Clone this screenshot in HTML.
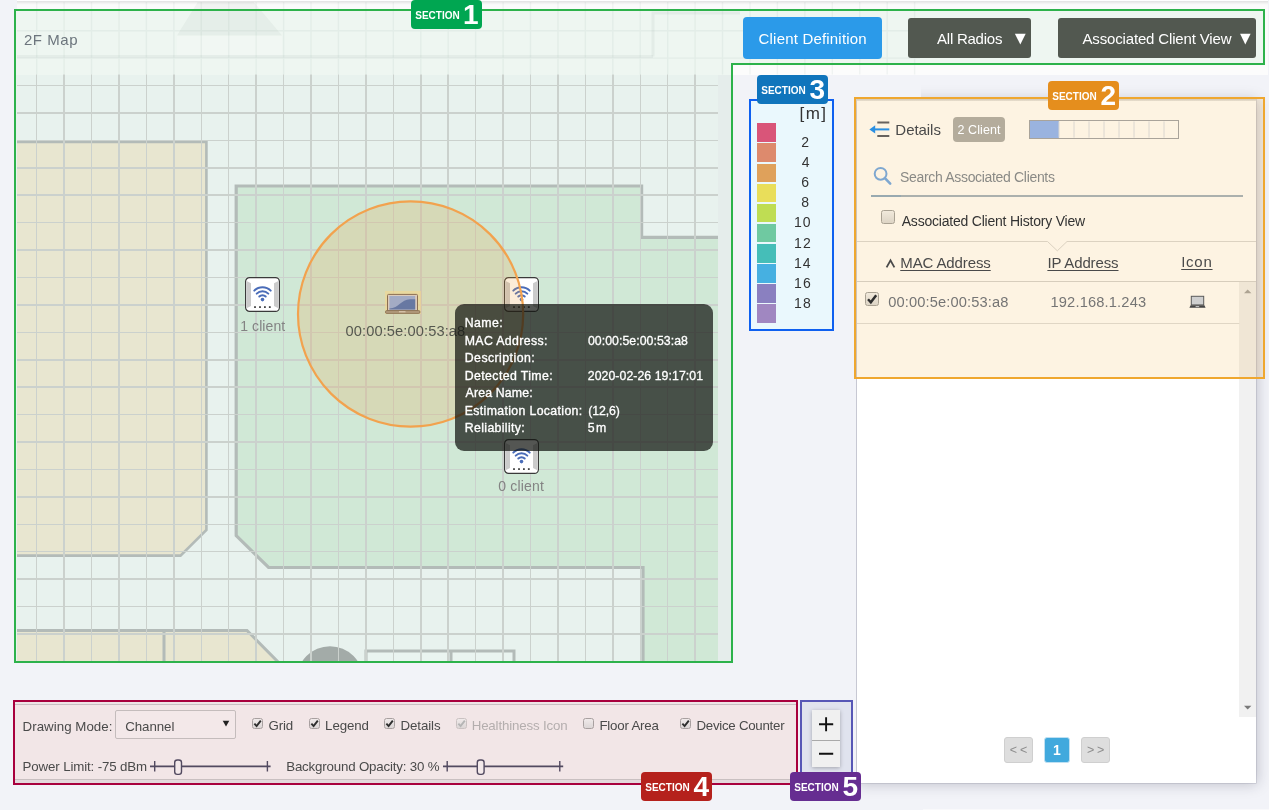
<!DOCTYPE html>
<html lang="en"><head><meta charset="utf-8"><title>2F Map</title>
<style>
html,body{margin:0;padding:0}
body{width:1269px;height:810px;overflow:hidden;background:#f2f3f8;position:relative;font-family:"Liberation Sans", Arial, sans-serif;}
#app{position:absolute;left:0;top:0;width:1269px;height:810px;overflow:hidden;will-change:transform}
.abs{position:absolute;display:block}
.t{position:absolute;white-space:nowrap;font-family:"Liberation Sans", Arial, sans-serif;}
</style></head>
<body>
<div id="app">
<div style="position:absolute;left:923px;top:808.5px;width:346.00px;height:1.50px;background:#f9f9fb;"></div>
<div style="position:absolute;left:17px;top:0px;width:1251.00px;height:74.50px;background:linear-gradient(#fff 0,#fff 1px,#e2e2e2 1px,#ececec 2.5px,#f7f7f7 4px,#fbfbfb 5px);"></div>
<div style="position:absolute;left:16px;top:11px;width:1247.00px;height:53.00px;background:#eef6f1;"></div>
<div style="position:absolute;left:16px;top:64px;width:716.00px;height:10.50px;background:#eef6f1;"></div>
<div style="position:absolute;left:733px;top:65.5px;width:535.00px;height:9.00px;background:#fcfcfc;"></div>
<div style="position:absolute;left:16px;top:74.5px;width:716.00px;height:586.50px;background:#e8f2ee;"></div>
<div style="position:absolute;left:718px;top:74.5px;width:14.00px;height:586.50px;background:#e5edeb;"></div>
<svg class="abs" style="left:0;top:0" width="1269" height="810" viewBox="0 0 1269 810"><defs><clipPath id="cm"><rect x="17" y="74.5" width="701" height="586.5"/></clipPath><filter id="bl" color-interpolation-filters="sRGB" x="-5%" y="-5%" width="110%" height="110%"><feGaussianBlur stdDeviation="0.6"/></filter><clipPath id="ch"><rect x="17" y="2" width="903" height="72.5"/></clipPath></defs><g clip-path="url(#ch)"><polygon points="199,0 252,0 282,35.5 177,35.5" fill="rgba(120,140,130,.07)"/><rect x="177" y="35.5" width="105" height="20" fill="rgba(255,255,255,.2)"/><rect x="17" y="55" width="636" height="3" fill="rgba(120,140,130,.08)"/><path d="M653,56.5 V13 H740" fill="none" stroke="rgba(120,140,130,.09)" stroke-width="3"/><path d="M36.69,2V75M64.12,2V75M91.55,2V75M118.99,2V75M146.42,2V75M173.86,2V75M201.29,2V75M228.73,2V75M256.16,2V75M283.60,2V75M311.03,2V75M338.47,2V75M365.90,2V75M393.34,2V75M420.77,2V75M448.21,2V75M475.64,2V75M503.08,2V75M530.51,2V75M557.95,2V75M585.38,2V75M612.82,2V75M640.25,2V75M667.69,2V75M695.12,2V75M722.56,2V75M750.00,2V75M777.43,2V75M804.87,2V75M832.30,2V75M859.74,2V75M887.17,2V75M914.60,2V75M17,30.72H920M17,58.14H920" stroke="rgba(120,150,135,.085)" stroke-width="1.4" fill="none"/></g><g clip-path="url(#cm)"><g filter="url(#bl)"><polygon points="10,141.9 206.4,141.9 206.4,530 180.5,555.6 10,555.6" fill="#e8e6d0" stroke="#b3bbb8" stroke-width="2.6"/><polygon points="236.2,186 641.6,186 641.6,237.4 730,237.4 730,670 643,670 643,567.5 268.6,567.5 236.2,535.6" fill="#d0e8d6"/><path d="M643,670 V567.5 H268.6 L236.2,535.6 V186 H641.6 V237.4 H730" fill="none" stroke="#b3bbb8" stroke-width="3.2"/><polygon points="10,630.5 247,630.5 286,670 10,670" fill="#e8e6d0" stroke="#b3bbb8" stroke-width="3"/><path d="M164,630.5V670" stroke="#b3bbb8" stroke-width="3"/><circle cx="330" cy="679.5" r="33.3" fill="#a3aba8"/><rect x="366" y="651" width="148" height="30" fill="#eaf4f0" stroke="#b3bbb8" stroke-width="3"/><path d="M451,651V670" stroke="#b3bbb8" stroke-width="3"/></g><path d="M36.69,74V661M64.12,74V661M91.55,74V661M118.99,74V661M146.42,74V661M173.86,74V661M201.29,74V661M228.73,74V661M256.16,74V661M283.60,74V661M311.03,74V661M338.47,74V661M365.90,74V661M393.34,74V661M420.77,74V661M448.21,74V661M475.64,74V661M503.08,74V661M530.51,74V661M557.95,74V661M585.38,74V661M612.82,74V661M640.25,74V661M667.69,74V661M695.12,74V661M17,85.56H718M17,112.98H718M17,140.40H718M17,167.82H718M17,195.24H718M17,222.66H718M17,250.08H718M17,277.50H718M17,304.92H718M17,332.34H718M17,359.76H718M17,387.18H718M17,414.60H718M17,442.02H718M17,469.44H718M17,496.86H718M17,524.28H718M17,551.70H718M17,579.12H718M17,606.54H718M17,633.96H718" stroke="#cbd1cd" stroke-width="1.5" fill="none" shape-rendering="crispEdges"/></g></svg>
<svg class="abs" style="left:245px;top:277px" width="35" height="35" viewBox="0 0 35 35"><rect x="0.6" y="0.6" width="33.8" height="33.8" rx="4" fill="#fff" stroke="#3a3a3a" stroke-width="1.2"/><polygon points="1.6,4 6,6.2 6,29 1.6,31.2" fill="#cbcbcb"/><polygon points="33.4,4 29,6.2 29,29 33.4,31.2" fill="#cbcbcb"/><g fill="none" stroke="#4a6cb8" stroke-width="2" stroke-linecap="round"><path d="M9.3,13.6 A11.6,11.6 0 0 1 25.7,13.6"/><path d="M11.7,16.6 A8.2,8.2 0 0 1 23.3,16.6"/><path d="M14.3,19.5 A4.5,4.5 0 0 1 20.7,19.5"/></g><circle cx="17.5" cy="22.6" r="1.8" fill="#4a6cb8"/><rect x="9.1" y="29.2" width="1.8" height="1.8" fill="#444"/><rect x="14.1" y="29.2" width="1.8" height="1.8" fill="#444"/><rect x="19.0" y="29.2" width="1.8" height="1.8" fill="#444"/><rect x="23.900000000000002" y="29.2" width="1.8" height="1.8" fill="#444"/></svg>
<svg class="abs" style="left:504px;top:277px" width="35" height="35" viewBox="0 0 35 35"><rect x="0.6" y="0.6" width="33.8" height="33.8" rx="4" fill="#fff" stroke="#3a3a3a" stroke-width="1.2"/><polygon points="1.6,4 6,6.2 6,29 1.6,31.2" fill="#cbcbcb"/><polygon points="33.4,4 29,6.2 29,29 33.4,31.2" fill="#cbcbcb"/><g fill="none" stroke="#4a6cb8" stroke-width="2" stroke-linecap="round"><path d="M9.3,13.6 A11.6,11.6 0 0 1 25.7,13.6"/><path d="M11.7,16.6 A8.2,8.2 0 0 1 23.3,16.6"/><path d="M14.3,19.5 A4.5,4.5 0 0 1 20.7,19.5"/></g><circle cx="17.5" cy="22.6" r="1.8" fill="#4a6cb8"/><rect x="9.1" y="29.2" width="1.8" height="1.8" fill="#444"/><rect x="14.1" y="29.2" width="1.8" height="1.8" fill="#444"/><rect x="19.0" y="29.2" width="1.8" height="1.8" fill="#444"/><rect x="23.900000000000002" y="29.2" width="1.8" height="1.8" fill="#444"/></svg>
<svg class="abs" style="left:504px;top:439px" width="35" height="35" viewBox="0 0 35 35"><rect x="0.6" y="0.6" width="33.8" height="33.8" rx="4" fill="#fff" stroke="#3a3a3a" stroke-width="1.2"/><polygon points="1.6,4 6,6.2 6,29 1.6,31.2" fill="#cbcbcb"/><polygon points="33.4,4 29,6.2 29,29 33.4,31.2" fill="#cbcbcb"/><g fill="none" stroke="#4a6cb8" stroke-width="2" stroke-linecap="round"><path d="M9.3,13.6 A11.6,11.6 0 0 1 25.7,13.6"/><path d="M11.7,16.6 A8.2,8.2 0 0 1 23.3,16.6"/><path d="M14.3,19.5 A4.5,4.5 0 0 1 20.7,19.5"/></g><circle cx="17.5" cy="22.6" r="1.8" fill="#4a6cb8"/><rect x="9.1" y="29.2" width="1.8" height="1.8" fill="#444"/><rect x="14.1" y="29.2" width="1.8" height="1.8" fill="#444"/><rect x="19.0" y="29.2" width="1.8" height="1.8" fill="#444"/><rect x="23.900000000000002" y="29.2" width="1.8" height="1.8" fill="#444"/></svg>
<span class="t" style="left:240.22px;top:318.60px;font-size:14px;line-height:14px;color:#838383;letter-spacing:0.079px;">1 client</span>
<span class="t" style="left:498.30px;top:479.00px;font-size:14px;line-height:14px;color:#838383;letter-spacing:0.182px;">0 client</span>
<svg class="abs" style="left:290px;top:195px" width="240" height="240" viewBox="290 195 240 240"><circle cx="410.6" cy="314" r="112.6" fill="rgba(240,160,60,0.2)" stroke="#f2a24e" stroke-width="2.2"/></svg>
<div style="position:absolute;left:385px;top:291px;width:35.70px;height:22.70px;background:rgba(250,215,135,.5);"></div>
<svg class="abs" style="left:385px;top:293px" width="36" height="21" viewBox="0 0 36 21"><rect x="2.5" y="1.4" width="30" height="16.6" rx="1" fill="#dccbbb" stroke="#8b6e52" stroke-width="1"/><rect x="4.4" y="3" width="25.8" height="13.6" fill="#a3abc4"/><path d="M4.4,16.6 V15.6 C14,15 16,6.6 25,6.2 H30.2 V16.6 Z" fill="#6878a2"/><rect x="0.5" y="17.6" width="34.4" height="2.8" rx="1.2" fill="#b29a7c" stroke="#846a4c" stroke-width=".8"/><rect x="14" y="18" width="6.5" height="1.4" fill="#d4c0a6"/></svg>
<span class="t" style="left:345.57px;top:323.60px;font-size:14.67px;line-height:14.67px;color:#55584f;letter-spacing:0.093px;">00:00:5e:00:53:a8</span>
<div style="position:absolute;left:455px;top:304px;width:258.00px;height:146.50px;background:rgba(18,21,16,.72);border-radius:9px;"></div>
<span class="t" style="left:464.78px;top:317.20px;font-size:12.3px;line-height:12.3px;color:#fff;letter-spacing:0.430px;-webkit-text-stroke:.35px #fff;">Name:</span>
<span class="t" style="left:464.78px;top:334.70px;font-size:12.3px;line-height:12.3px;color:#fff;letter-spacing:0.362px;-webkit-text-stroke:.35px #fff;">MAC Address:</span>
<span class="t" style="left:587.88px;top:334.70px;font-size:12.3px;line-height:12.3px;color:#fff;letter-spacing:0.052px;-webkit-text-stroke:.3px #fff;">00:00:5e:00:53:a8</span>
<span class="t" style="left:464.78px;top:352.20px;font-size:12.3px;line-height:12.3px;color:#fff;letter-spacing:0.449px;-webkit-text-stroke:.35px #fff;">Description:</span>
<span class="t" style="left:464.78px;top:369.70px;font-size:12.3px;line-height:12.3px;color:#fff;letter-spacing:0.399px;-webkit-text-stroke:.35px #fff;">Detected Time:</span>
<span class="t" style="left:587.76px;top:369.70px;font-size:12.3px;line-height:12.3px;color:#fff;letter-spacing:0.059px;-webkit-text-stroke:.3px #fff;">2020-02-26 19:17:01</span>
<span class="t" style="left:465.56px;top:387.20px;font-size:12.3px;line-height:12.3px;color:#fff;letter-spacing:0.156px;-webkit-text-stroke:.35px #fff;">Area Name:</span>
<span class="t" style="left:464.78px;top:404.70px;font-size:12.3px;line-height:12.3px;color:#fff;letter-spacing:0.352px;-webkit-text-stroke:.35px #fff;">Estimation Location:</span>
<span class="t" style="left:588.20px;top:404.70px;font-size:12.3px;line-height:12.3px;color:#fff;letter-spacing:-0.096px;-webkit-text-stroke:.3px #fff;">(12,6)</span>
<span class="t" style="left:464.78px;top:422.20px;font-size:12.3px;line-height:12.3px;color:#fff;letter-spacing:0.358px;-webkit-text-stroke:.35px #fff;">Reliability:</span>
<span class="t" style="left:587.64px;top:422.20px;font-size:12.3px;line-height:12.3px;color:#fff;letter-spacing:1.569px;-webkit-text-stroke:.3px #fff;">5m</span>
<span class="t" style="left:23.95px;top:31.90px;font-size:15px;line-height:15px;color:#6c757d;letter-spacing:0.537px;">2F Map</span>
<div style="position:absolute;left:743px;top:17px;width:139.00px;height:42.00px;background:#2b9ae9;border-radius:4px;"></div>
<span class="t" style="left:758.59px;top:31.10px;font-size:15px;line-height:15px;color:#fff;letter-spacing:0.188px;">Client Definition</span>
<div style="position:absolute;left:908px;top:18px;width:123.00px;height:40.00px;background:#525850;border-radius:3px;"></div>
<span class="t" style="left:937.04px;top:31.10px;font-size:15px;line-height:15px;color:#fff;letter-spacing:-0.237px;">All Radios</span>
<div style="position:absolute;left:1058px;top:18px;width:198.00px;height:40.00px;background:#525850;border-radius:3px;"></div>
<span class="t" style="left:1082.44px;top:31.10px;font-size:15px;line-height:15px;color:#fff;letter-spacing:-0.151px;">Associated Client View</span>
<svg class="abs" style="left:1010px;top:30px" width="250" height="18" viewBox="1010 30 250 18"><polygon points="1014.9,33.8 1025.7,33.8 1020.3,44.4" fill="#fff"/><polygon points="1240.1,33.8 1250.6,33.8 1245.3,44.4" fill="#fff"/></svg>
<div style="position:absolute;left:749px;top:99px;width:85.30px;height:232.00px;box-sizing:border-box;border:2px solid #0f60f0;background:#eaf8fd;"></div>
<div style="position:absolute;left:757px;top:123.3px;width:19.00px;height:18.70px;background:#d95579;"></div>
<div style="position:absolute;left:757px;top:143.4px;width:19.00px;height:18.70px;background:#dd8a6d;"></div>
<div style="position:absolute;left:757px;top:163.5px;width:19.00px;height:18.70px;background:#dfa15b;"></div>
<div style="position:absolute;left:757px;top:183.6px;width:19.00px;height:18.70px;background:#e9de5a;"></div>
<div style="position:absolute;left:757px;top:203.7px;width:19.00px;height:18.70px;background:#bfdd53;"></div>
<div style="position:absolute;left:757px;top:223.8px;width:19.00px;height:18.70px;background:#6fc9a1;"></div>
<div style="position:absolute;left:757px;top:243.9px;width:19.00px;height:18.70px;background:#45beb8;"></div>
<div style="position:absolute;left:757px;top:264.0px;width:19.00px;height:18.70px;background:#46b0e1;"></div>
<div style="position:absolute;left:757px;top:284.1px;width:19.00px;height:18.70px;background:#8a80c0;"></div>
<div style="position:absolute;left:757px;top:304.2px;width:19.00px;height:18.70px;background:#a087c1;"></div>
<span class="t" style="left:799.56px;top:105.30px;font-size:17px;line-height:17px;color:#333;letter-spacing:1.467px;">[m]</span>
<span class="t" style="left:801.29px;top:135.20px;font-size:14px;line-height:14px;color:#333;">2</span>
<span class="t" style="left:801.65px;top:155.26px;font-size:14px;line-height:14px;color:#333;">4</span>
<span class="t" style="left:801.25px;top:175.32px;font-size:14px;line-height:14px;color:#333;">6</span>
<span class="t" style="left:801.33px;top:195.38px;font-size:14px;line-height:14px;color:#333;">8</span>
<span class="t" style="left:793.92px;top:215.44px;font-size:14px;line-height:14px;color:#333;letter-spacing:1.157px;">10</span>
<span class="t" style="left:793.92px;top:235.50px;font-size:14px;line-height:14px;color:#333;letter-spacing:1.271px;">12</span>
<span class="t" style="left:793.92px;top:255.56px;font-size:14px;line-height:14px;color:#333;letter-spacing:1.078px;">14</span>
<span class="t" style="left:793.92px;top:275.62px;font-size:14px;line-height:14px;color:#333;letter-spacing:1.216px;">16</span>
<span class="t" style="left:793.92px;top:295.68px;font-size:14px;line-height:14px;color:#333;letter-spacing:1.251px;">18</span>
<div style="position:absolute;left:857px;top:99px;width:399.00px;height:684.00px;background:#fff;box-shadow:1px 1px 13px rgba(30,30,60,.25),0 0 0 .6px rgba(120,120,140,.3);clip-path:inset(-30px -30px -30px -1px);"></div>
<div style="position:absolute;left:733px;top:75px;width:188.00px;height:24.00px;background:#f2f3f8;"></div>
<div style="position:absolute;left:1239.4px;top:282px;width:16.60px;height:434.50px;background:#f1f1f1;"></div>
<svg class="abs" style="left:1239px;top:282px" width="17" height="435" viewBox="1239 282 17 435"><polygon points="1244,293.2 1251.4,293.2 1247.7,289.4" fill="#a3a3a3"/><polygon points="1244,705.8 1251.4,705.8 1247.7,709.6" fill="#7a7a7a"/></svg>
<svg class="abs" style="left:857px;top:236px" width="400" height="92" viewBox="857 236 400 92"><path d="M857,241.5 H1047.5 L1057.3,250.8 L1067,241.5 H1256" fill="none" stroke="#d9d9d9" stroke-width="1"/><path d="M857,281.5H1256" stroke="#d4d4d4" stroke-width="1"/><path d="M857,323.5H1239.4" stroke="#dedede" stroke-width="1"/></svg>
<div style="position:absolute;left:857px;top:99px;width:399.00px;height:1.60px;background:linear-gradient(#cfcfcf,#e9e9e9);"></div>
<div style="position:absolute;left:856px;top:99px;width:407.00px;height:278.00px;background:rgba(240,165,40,.135);"></div>
<svg class="abs" style="left:868px;top:120px" width="24" height="20" viewBox="868 120 24 20"><path d="M877.3,122.6H889.3M877.3,136H889.3" stroke="#67625e" stroke-width="2"/><path d="M873.5,129.4H889.3" stroke="#2a8fe2" stroke-width="2"/><polygon points="869.4,129.4 875.2,125.2 875.2,133.6" fill="#2a8fe2"/></svg>
<span class="t" style="left:895.35px;top:122.20px;font-size:15px;line-height:15px;color:#4a4a4a;letter-spacing:-0.051px;">Details</span>
<div style="position:absolute;left:953px;top:117px;width:52.20px;height:25.00px;background:#b4ac9c;border-radius:4px;"></div>
<span class="t" style="left:957.56px;top:124.20px;font-size:12.5px;line-height:12.5px;color:#fff;letter-spacing:0.065px;">2 Client</span>
<div style="position:absolute;left:1029px;top:120.4px;width:150.00px;height:18.20px;box-sizing:border-box;border:1px solid #a9a39a;"></div>
<div style="position:absolute;left:1030px;top:121.4px;width:29.00px;height:16.20px;background:#9ab3df;"></div>
<svg class="abs" style="left:1029px;top:120px" width="151" height="19" viewBox="1029 120 151 19"><path d="M1059.0,121.4V137.6M1074.0,121.4V137.6M1089.0,121.4V137.6M1104.0,121.4V137.6M1119.0,121.4V137.6M1134.0,121.4V137.6M1149.0,121.4V137.6M1164.0,121.4V137.6" stroke="#dad6d0" stroke-width="1"/></svg>
<svg class="abs" style="left:870px;top:164px" width="24" height="24" viewBox="870 164 24 24"><circle cx="880.6" cy="173.8" r="5.9" fill="none" stroke="#7ea7d0" stroke-width="2"/><path d="M884.9,178.2L890.2,183.6" stroke="#7ea7d0" stroke-width="2.6" stroke-linecap="round"/></svg>
<span class="t" style="left:900.05px;top:170.00px;font-size:14px;line-height:14px;color:#8a8a86;letter-spacing:-0.323px;">Search Associated Clients</span>
<div style="position:absolute;left:871px;top:194.6px;width:372.00px;height:2.00px;background:#abb0ad;"></div>
<div style="position:absolute;left:871px;top:194.6px;width:30.00px;height:2.00px;background:#98a9b0;"></div>
<div style="position:absolute;left:881px;top:210.0px;width:13.60px;height:13.60px;box-sizing:border-box;border:1px solid #a9a192;border-radius:2.5px;background:linear-gradient(#f1e9db,#ddd4c5);"></div>
<span class="t" style="left:901.75px;top:214.20px;font-size:14px;line-height:14px;color:#333;letter-spacing:-0.215px;">Associated Client History View</span>
<svg class="abs" style="left:884px;top:257px" width="14" height="13" viewBox="884 257 14 13"><path d="M886.6,267.4 L890.5,260.4 L894.4,267.4" fill="none" stroke="#4a4a4a" stroke-width="1.8"/></svg>
<span class="t" style="left:900.25px;top:255.10px;font-size:15px;line-height:15px;color:#4a4a4a;letter-spacing:-0.111px;text-decoration:underline;text-underline-offset:1.5px;">MAC Address</span>
<span class="t" style="left:1047.39px;top:255.10px;font-size:15px;line-height:15px;color:#4a4a4a;letter-spacing:-0.115px;text-decoration:underline;text-underline-offset:1.5px;">IP Address</span>
<span class="t" style="left:1181.19px;top:253.80px;font-size:15px;line-height:15px;color:#4a4a4a;letter-spacing:0.745px;text-decoration:underline;text-underline-offset:1.5px;">Icon</span>
<div style="position:absolute;left:865px;top:292px;width:14.00px;height:14.00px;box-sizing:border-box;border:1px solid #a9a192;border-radius:2.5px;background:linear-gradient(#f1e9db,#ddd4c5);"></div><svg class="abs" style="left:865px;top:292px" width="14" height="14" viewBox="0 0 12 12"><path d="M2.6,6.2 L5,8.8 L9.6,2.8" fill="none" stroke="#2e2e2e" stroke-width="2.1"/></svg>
<span class="t" style="left:888.17px;top:294.60px;font-size:14.67px;line-height:14.67px;color:#757575;letter-spacing:0.125px;">00:00:5e:00:53:a8</span>
<span class="t" style="left:1050.47px;top:294.60px;font-size:14.67px;line-height:14.67px;color:#757575;letter-spacing:0.161px;">192.168.1.243</span>
<svg class="abs" style="left:1188px;top:295px" width="19" height="14" viewBox="1188 295 19 14"><rect x="1191.3" y="296.3" width="12.4" height="8.6" fill="#cfcfcf" stroke="#5a5a5a" stroke-width="1"/><polygon points="1190.6,305.2 1204.4,305.2 1205.6,307.7 1189.4,307.7" fill="#454545"/><rect x="1195.6" y="306.2" width="3.6" height="0.9" fill="#ddd"/></svg>
<div style="position:absolute;left:1004px;top:737px;width:29.00px;height:25.50px;box-sizing:border-box;border:1px solid #cfcfcf;border-radius:3px;background:#dedede;"></div>
<div style="position:absolute;left:1044.2px;top:737px;width:25.60px;height:25.50px;box-sizing:border-box;border:1px solid #bfe0f2;border-radius:3px;background:#41a9dd;"></div>
<div style="position:absolute;left:1081px;top:737px;width:29.00px;height:25.50px;box-sizing:border-box;border:1px solid #cfcfcf;border-radius:3px;background:#dedede;"></div>
<span class="t" style="left:1009.78px;top:744.40px;font-size:12.5px;line-height:12.5px;color:#8d8d8d;letter-spacing:2.878px;">&lt;&lt;</span>
<span class="t" style="left:1053.00px;top:743.00px;font-size:14px;line-height:14px;color:#fff;font-weight:700;">1</span>
<span class="t" style="left:1086.96px;top:744.40px;font-size:12.5px;line-height:12.5px;color:#8d8d8d;letter-spacing:2.722px;">&gt;&gt;</span>
<div style="position:absolute;left:854px;top:97px;width:411.00px;height:282.00px;box-sizing:border-box;border:2px solid #efa72f;"></div>
<div style="position:absolute;left:13px;top:700px;width:785.00px;height:85.00px;box-sizing:border-box;border:2px solid #a8003d;background:#f2e6e7;"></div>
<div style="position:absolute;left:15px;top:702px;width:781.00px;height:1.60px;background:#eee4e6;"></div>
<div style="position:absolute;left:15px;top:703.5px;width:781.00px;height:1.30px;background:#c9bfc2;"></div>
<div style="position:absolute;left:15px;top:779px;width:781.00px;height:1.00px;background:#c9c0c1;"></div>
<div style="position:absolute;left:15px;top:780px;width:781.00px;height:3.00px;background:#e3d9dc;"></div>
<span class="t" style="left:22.59px;top:719.90px;font-size:13.3px;line-height:13.3px;color:#4a4a4a;letter-spacing:0.031px;">Drawing Mode:</span>
<div style="position:absolute;left:115.4px;top:709.6px;width:120.40px;height:29.80px;box-sizing:border-box;border:1px solid #c4bcbc;border-radius:2px;background:#f3e8e9;"></div>
<span class="t" style="left:125.19px;top:719.90px;font-size:13.3px;line-height:13.3px;color:#4a4a4a;letter-spacing:-0.056px;">Channel</span>
<svg class="abs" style="left:222px;top:718px" width="9" height="9" viewBox="222 718 9 9"><polygon points="222.7,720.7 229.3,720.7 226,726.6" fill="#222"/></svg>
<div style="position:absolute;left:252px;top:718px;width:11.00px;height:11.00px;box-sizing:border-box;border:1px solid #a8a0a0;border-radius:2.5px;background:linear-gradient(#f0eaea,#dcd6d6);"></div><svg class="abs" style="left:252px;top:718px" width="11" height="11" viewBox="0 0 12 12"><path d="M2.6,6.2 L5,8.8 L9.6,2.8" fill="none" stroke="#2e2e2e" stroke-width="2.1"/></svg>
<span class="t" style="left:268.49px;top:719.40px;font-size:13.3px;line-height:13.3px;color:#4a4a4a;letter-spacing:-0.114px;">Grid</span>
<div style="position:absolute;left:309.2px;top:718px;width:11.00px;height:11.00px;box-sizing:border-box;border:1px solid #a8a0a0;border-radius:2.5px;background:linear-gradient(#f0eaea,#dcd6d6);"></div><svg class="abs" style="left:309.2px;top:718px" width="11" height="11" viewBox="0 0 12 12"><path d="M2.6,6.2 L5,8.8 L9.6,2.8" fill="none" stroke="#2e2e2e" stroke-width="2.1"/></svg>
<span class="t" style="left:325.09px;top:719.40px;font-size:13.3px;line-height:13.3px;color:#4a4a4a;letter-spacing:-0.097px;">Legend</span>
<div style="position:absolute;left:384.4px;top:718px;width:11.00px;height:11.00px;box-sizing:border-box;border:1px solid #a8a0a0;border-radius:2.5px;background:linear-gradient(#f0eaea,#dcd6d6);"></div><svg class="abs" style="left:384.4px;top:718px" width="11" height="11" viewBox="0 0 12 12"><path d="M2.6,6.2 L5,8.8 L9.6,2.8" fill="none" stroke="#2e2e2e" stroke-width="2.1"/></svg>
<span class="t" style="left:400.39px;top:719.40px;font-size:13.3px;line-height:13.3px;color:#4a4a4a;letter-spacing:-0.062px;">Details</span>
<div style="position:absolute;left:456.4px;top:718px;width:11.00px;height:11.00px;box-sizing:border-box;border:1px solid #cac2c2;border-radius:2.5px;background:linear-gradient(#f0eaea,#dcd6d6);"></div><svg class="abs" style="left:456.4px;top:718px" width="11" height="11" viewBox="0 0 12 12"><path d="M2.6,6.2 L5,8.8 L9.6,2.8" fill="none" stroke="#b5b5b5" stroke-width="2.1"/></svg>
<span class="t" style="left:471.69px;top:719.40px;font-size:13.3px;line-height:13.3px;color:#b4aeae;letter-spacing:-0.161px;">Healthiness Icon</span>
<div style="position:absolute;left:583.2px;top:718px;width:11.00px;height:11.00px;box-sizing:border-box;border:1px solid #a8a0a0;border-radius:2.5px;background:linear-gradient(#f0eaea,#dcd6d6);"></div>
<span class="t" style="left:599.39px;top:719.40px;font-size:13.3px;line-height:13.3px;color:#4a4a4a;letter-spacing:-0.202px;">Floor Area</span>
<div style="position:absolute;left:680.3px;top:718px;width:11.00px;height:11.00px;box-sizing:border-box;border:1px solid #a8a0a0;border-radius:2.5px;background:linear-gradient(#f0eaea,#dcd6d6);"></div><svg class="abs" style="left:680.3px;top:718px" width="11" height="11" viewBox="0 0 12 12"><path d="M2.6,6.2 L5,8.8 L9.6,2.8" fill="none" stroke="#2e2e2e" stroke-width="2.1"/></svg>
<span class="t" style="left:696.49px;top:719.40px;font-size:13.3px;line-height:13.3px;color:#4a4a4a;letter-spacing:-0.272px;">Device Counter</span>
<span class="t" style="left:22.59px;top:759.60px;font-size:13.3px;line-height:13.3px;color:#4a4a4a;letter-spacing:-0.137px;">Power Limit: -75 dBm</span>
<span class="t" style="left:286.19px;top:759.60px;font-size:13.3px;line-height:13.3px;color:#4a4a4a;letter-spacing:-0.172px;">Background Opacity: 30 %</span>
<svg class="abs" style="left:148px;top:756px" width="124.60000000000002" height="22" viewBox="148 756 124.60000000000002 22"><path d="M150,766.4H270.6" stroke="#524a60" stroke-width="1.8"/><path d="M154.7,761V771.4M267.4,761V771.4" stroke="#524a60" stroke-width="1.4"/><rect x="174.7" y="760" width="6.8" height="14.4" rx="2.6" fill="#f3e9ea" stroke="#524a60" stroke-width="1.4"/></svg>
<svg class="abs" style="left:441.4px;top:756px" width="124.20000000000005" height="22" viewBox="441.4 756 124.20000000000005 22"><path d="M443.4,766.4H563.6" stroke="#524a60" stroke-width="1.8"/><path d="M447.6,761V771.4M560.2,761V771.4" stroke="#524a60" stroke-width="1.4"/><rect x="477.7" y="760" width="6.8" height="14.4" rx="2.6" fill="#f3e9ea" stroke="#524a60" stroke-width="1.4"/></svg>
<div style="position:absolute;left:800px;top:700px;width:53.00px;height:85.00px;box-sizing:border-box;border:2px solid #5757b6;background:#e0e3ee;"></div>
<div style="position:absolute;left:812px;top:709.8px;width:28.30px;height:57.20px;background:#f0f0f0;box-shadow:0 1px 4px rgba(0,0,0,.28);"></div>
<div style="position:absolute;left:812px;top:739.6px;width:28.30px;height:1.20px;background:#a9a9a9;"></div>
<svg class="abs" style="left:812px;top:710px" width="28" height="57" viewBox="812 710 28 57"><path d="M819,724.2H833.2M826.1,717.2V731.2M819,753.8H833.2" stroke="#111" stroke-width="1.9"/></svg>
<svg class="abs" style="left:0;top:0" width="1269" height="810" viewBox="0 0 1269 810"><polygon points="15,10 1264,10 1264,64.1 732,64.1 732,662 15,662" fill="none" stroke="#2db24b" stroke-width="2"/></svg>
<div style="position:absolute;left:411px;top:0px;width:71.00px;height:29.00px;background:#00a651;border-radius:4px;"></div><span class="t" style="left:415.23px;top:10.50px;font-size:10px;line-height:10px;color:#fff;font-weight:700;">SECTION</span><span class="t" style="left:463.04px;top:1.40px;font-size:28px;line-height:28px;color:#fff;font-weight:700;">1</span>
<div style="position:absolute;left:1048px;top:81px;width:71.00px;height:29.00px;background:#e58e1d;border-radius:4px;"></div><span class="t" style="left:1052.23px;top:91.50px;font-size:10px;line-height:10px;color:#fff;font-weight:700;">SECTION</span><span class="t" style="left:1100.60px;top:82.40px;font-size:28px;line-height:28px;color:#fff;font-weight:700;">2</span>
<div style="position:absolute;left:757px;top:75px;width:71.00px;height:29.00px;background:#1075bc;border-radius:4px;"></div><span class="t" style="left:761.23px;top:85.50px;font-size:10px;line-height:10px;color:#fff;font-weight:700;">SECTION</span><span class="t" style="left:809.39px;top:76.40px;font-size:28px;line-height:28px;color:#fff;font-weight:700;">3</span>
<div style="position:absolute;left:641px;top:772px;width:71.00px;height:29.00px;background:#b5211c;border-radius:4px;"></div><span class="t" style="left:645.23px;top:782.50px;font-size:10px;line-height:10px;color:#fff;font-weight:700;">SECTION</span><span class="t" style="left:693.56px;top:773.40px;font-size:28px;line-height:28px;color:#fff;font-weight:700;">4</span>
<div style="position:absolute;left:790px;top:772px;width:71.00px;height:29.00px;background:#662d91;border-radius:4px;"></div><span class="t" style="left:794.23px;top:782.50px;font-size:10px;line-height:10px;color:#fff;font-weight:700;">SECTION</span><span class="t" style="left:842.54px;top:773.40px;font-size:28px;line-height:28px;color:#fff;font-weight:700;">5</span>
</div>
</body></html>
